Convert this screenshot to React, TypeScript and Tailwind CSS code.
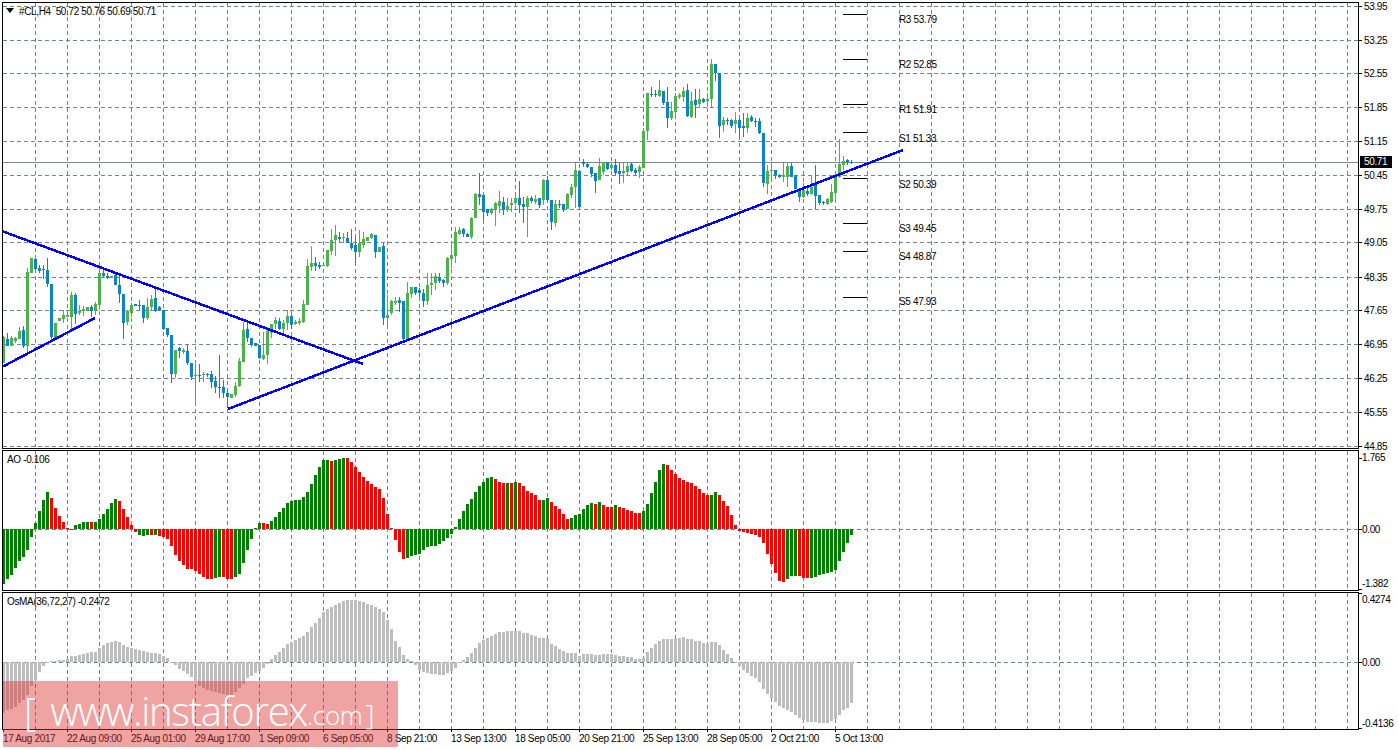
import React from "react";

// ---- chart data (pixel values read off the chart) ----
type C = [number, number, number, number, 0 | 1]; // body top, body bottom, high, low, 1 = bull
const A: C[] = [
[322,400,318,400,1],[328,347,310,347,0],[323,347,318,347,1],[323,332,320,340,1],[302,328,290,328,1],[300,348,288,355,0],[127,348,115,370,1],[84,130,84,130,1],[87,118,87,118,0],[115,123,105,130,0],[117,120,105,147,0],[120,162,85,172,0],[162,322,162,335,0],[280,325,280,325,1],[264,274,264,274,1],[255,268,240,280,1],[255,260,255,262,1],[195,260,185,300,1],[195,252,190,282,0],[243,248,225,255,1],[238,243,228,258,1],[231,243,231,243,1],[231,243,225,262,0],[222,243,215,255,1],[130,225,112,240,1],[130,138,120,145,0],[138,143,130,148,0],[138,143,138,143,1],[135,165,125,165,0],[165,192,130,218,0],[192,280,192,327,0],[243,277,240,285,1],[225,250,220,260,1],[222,228,222,228,0],[225,228,210,240,0],[225,265,225,278,0],[232,265,205,270,1],[208,232,195,240,1],[205,242,170,245,0],[232,240,228,243,0],[240,298,240,300,0],[295,316,295,320,0],[316,432,315,458,0],[360,432,360,445,1],[355,362,352,385,0],[360,366,355,372,1],[363,400,345,405,0],[400,440,400,450,0],[435,437,400,516,1],[435,437,402,455,0],[433,435,425,455,1],[433,436,428,440,0],[433,456,422,475,0],[453,470,438,490,0],[470,472,375,505,0],[470,490,450,505,0],[490,500,480,535,0],[492,503,492,503,1],[467,495,455,500,1],[393,467,385,470,1],[300,395,275,395,1],[297,323,280,335,0],[323,346,323,350,0],[340,348,340,348,0],[346,385,346,388,0],[375,387,305,390,1],[302,375,290,402,1],[282,310,282,325,1],[270,282,262,298,1],[272,296,265,300,0],[280,297,270,310,1],[258,280,240,300,1],[258,285,255,298,0],[277,282,270,285,1],[272,280,265,285,1],[222,276,210,280,1],[108,225,88,225,1],[100,112,48,122,1],[100,108,80,122,0],[104,112,95,118,0],[104,108,104,108,1],[60,107,60,110,1],[30,62,-3,75,1],[16,30,-15,78,1],[20,26,5,35,0],[22,24,10,40,1],[24,40,5,40,0],[38,55,-3,60,0],[45,65,20,100,0],[40,65,0,80,1],[26,45,5,55,1],[22,34,22,34,1],[12,24,8,26,1],[15,65,15,85,0],[50,65,50,65,1],[48,265,38,285,0],[255,263,195,295,1],[212,250,210,255,1],[212,220,200,225,1],[210,218,200,245,0],[212,328,212,330,0],[190,330,155,330,1],[172,192,170,205,1],[172,188,170,195,0],[180,190,175,200,0],[190,212,178,230,0],[165,212,128,225,1],[160,165,130,195,1],[138,160,128,180,1],[142,152,130,160,0],[150,160,148,170,0],[85,158,80,165,1],[75,87,40,115,1],[5,78,-9,100,1],
];
const B: C[] = [
[540,552,530,556,1],[538,553,535,560,0],[551,560,548,562,0],[503,562,500,567,1],[433,503,430,505,1],[433,440,370,465,0],[435,485,435,512,0],[478,490,478,497,0],[476,488,474,495,1],[458,477,455,527,1],[453,468,422,490,1],[456,480,440,495,0],[468,480,445,485,1],[458,465,445,485,1],[445,460,435,465,1],[445,465,393,490,0],[462,470,440,520,0],[445,470,437,560,1],[445,452,437,460,0],[447,456,435,462,1],[445,466,445,475,0],[390,450,388,465,1],[390,450,378,455,0],[450,515,450,540,0],[463,518,450,530,1],[462,465,450,475,0],[462,480,462,485,0],[432,478,428,478,1],[412,435,403,445,1],[360,412,338,475,1],[363,470,360,475,0],[335,343,328,350,0],[343,352,340,355,0],[350,372,350,380,0],[370,393,370,430,0],[348,390,325,390,1],[335,365,335,375,1],[337,357,335,360,0],[345,353,340,360,1],[345,370,328,375,0],[363,372,340,402,0],[363,368,335,400,1],[348,365,340,375,1],[342,362,340,365,0],[360,368,355,375,0],[350,367,345,385,1],[243,355,235,355,1],[130,242,128,270,1],[132,135,110,142,0],[133,135,120,142,0],[120,138,90,140,1],[122,160,122,165,0],[155,205,112,235,0],[183,205,155,210,1],[138,185,128,195,1],[135,140,128,148,1],[122,140,112,155,1],[120,198,103,200,0],[153,200,125,203,1],[150,165,118,205,0],[148,162,118,170,1],[148,157,145,158,0],[148,153,130,170,1],[42,148,28,172,1],[42,70,42,92,0],[68,228,68,265,0],[210,225,200,245,1],[210,213,205,225,0],[210,228,208,235,0],[210,222,185,250,1],[210,233,205,260,0],[228,233,190,260,0],[205,233,190,250,1],[202,213,195,215,0],[212,215,205,232,0],[212,250,205,252,0],[248,398,248,412,0],[363,402,345,432,1],[360,363,340,390,1],[360,375,360,388,0],[375,382,372,385,0],[375,380,340,395,1],[348,382,338,410,1],[348,380,340,382,0],[375,417,375,418,0],[417,440,415,455,0],[420,440,400,443,1],[422,432,415,437,0],[412,432,375,435,1],[405,437,345,478,0],[435,458,435,465,0],[455,458,452,465,0],[447,462,445,465,1],[427,455,403,458,1],[378,428,378,460,1],[342,382,268,385,1],[332,345,318,360,1],[331,337,327,345,0],[335,337,330,342,0],
];
const toPx = (base: number) => (c: C): C => [base + c[0] / 3, base + c[1] / 3, base + c[2] / 3, base + c[3] / 3, c[4]];
const candles: C[] = [...A.map(toPx(230)), ...B.map(toPx(50))];

const aoRuns: [string, number[]][] = [
["g",[-55,-50,-46,-39,-32,-28,-21,-8,6,18,29,37]],
["r",[31,21,13,7,1,-1]],
["g",[4,5,7,7]],["r",[7]],["g",[7,10,15,20,26,30]],["r",[28,20,12,4,-3]],
["g",[-6,-7,-6]],["r",[-6]],["g",[-6]],["r",[-7,-8,-10,-17,-26,-32,-36,-40,-40,-42,-45,-48,-50,-50]],
["g",[-49,-48]],["r",[-48,-50,-50]],["g",[-48,-45,-34,-21,-10,1,6]],["r",[6,5]],
["g",[8,12,17,21,26,28,29,29,32,37,45,54,62,69,69]],["r",[68]],["g",[69,70,71]],
["r",[71,67,62,57,52,48,45,42,40,31,15,1,-11,-23,-30]],
["g",[-29,-27,-26,-25,-21,-18,-17,-17,-15,-12,-9,-5,2,10,18,25,30,37,43,47,51,52]],
["r",[50,47,46]],["g",[46]],["r",[46]],["g",[47]],["r",[46,43,38,36,34,29]],["g",[29,31]],
["r",[27,23,20,15,10]],["g",[11,14,15,20,24,26]],["r",[25]],["g",[27]],["r",[24,22,22]],["g",[24]],
["r",[22,21,19,18,16,16]],["g",[18,25,36,47,59,65]],["r",[64,59,55,51,49,47,46,43,40,36,34]],["g",[34,37]],
["r",[34,28,23,14,4,-2,-3,-4,-5,-6,-8,-14,-25,-35,-44,-52,-53]],["g",[-50,-47,-47]],["r",[-47,-49,-49]],
["g",[-49,-48,-46,-45,-44,-43,-41,-32,-23,-14,-6]],
];
const ao: [string, number][] = aoRuns.flatMap(([c, v]) => v.map((n) => [c, n] as [string, number]));

const osma = [-51,-48,-47,-45,-41,-38,-33,-24,-18,-10,-4,-1,1,1,2,2,3,6,6,7,8,9,10,10,14,17,19,20,21,20,17,15,14,13,12,11,10,9,9,8,6,4,0,-3,-7,-9,-12,-15,-19,-24,-26,-28,-29,-30,-31,-32,-33,-33,-30,-26,-22,-16,-14,-11,-9,-6,-2,3,7,10,14,18,20,22,24,26,30,35,39,44,50,53,55,57,59,61,62,62,62,61,60,58,57,55,53,50,42,33,21,15,7,3,1,-3,-8,-10,-11,-12,-12,-13,-13,-11,-9,-6,-1,2,5,9,14,19,22,24,26,28,30,30,31,31,31,31,29,29,27,26,24,24,24,18,16,13,11,9,9,9,6,8,8,8,7,7,8,8,8,7,6,6,5,5,3,3,4,10,14,18,21,23,23,23,24,24,25,23,23,21,21,19,18,20,20,17,12,8,4,0,-4,-8,-11,-14,-16,-20,-27,-32,-36,-40,-44,-46,-48,-50,-53,-56,-58,-60,-60,-60,-61,-61,-61,-59,-57,-53,-48,-46,-41];

// ---- grid + axes ----
const vGrid = Array.from({ length: 42 }, (_, k) => 35 + 32 * k);
const mainTicks: [string, number][] = [["53.95",6],["53.25",40],["52.55",73],["51.85",107],["51.15",141],["50.45",175],["49.75",209],["49.05",242],["48.35",277],["47.65",310],["46.95",344],["46.25",378],["45.55",412],["44.85",446]];
const pivots: [string, number, number][] = [["R3 53.79",14,19],["R2 52.85",59,64],["R1 51.91",104,109],["S1 51.33",132,138],["S2 50.39",178,184],["S3 49.45",223,228],["S4 48.87",251,256],["S5 47.93",297,301]];
const dates = ["17 Aug 2017","22 Aug 09:00","25 Aug 01:00","29 Aug 17:00","1 Sep 09:00","6 Sep 05:00","8 Sep 21:00","13 Sep 13:00","18 Sep 05:00","20 Sep 21:00","25 Sep 13:00","28 Sep 05:00","2 Oct 21:00","5 Oct 13:00"];

const GRID = "#76828f";
const font = "font-['Liberation_Sans',Arial,sans-serif] text-[10px] leading-[12px] tracking-[-0.35px] text-black";

function Grid({ top, bottom, ys }: { top: number; bottom: number; ys: number[] }) {
  return (
    <g stroke={GRID} strokeWidth={1} strokeDasharray="4 3" shapeRendering="crispEdges">
      {vGrid.map((x) => <line key={x} x1={x + 0.5} x2={x + 0.5} y1={top} y2={bottom} />)}
      {ys.map((y) => <line key={y} x1={3} x2={1358} y1={y + 0.5} y2={y + 0.5} />)}
    </g>
  );
}

function Plot({ top, height, children }: { top: number; height: number; children: React.ReactNode }) {
  return (
    <svg className="block" width={1355} height={height} viewBox={`3 ${top} 1355 ${height}`}>
      {children}
    </svg>
  );
}

// Axis column: the place of a value on the scale is the content itself
function Axis({ paneTop, ticks, height, tickYs, left }: { paneTop: number; ticks: [string, number][]; height: number; tickYs: number[]; left: number }) {
  return (
    <div className="relative w-[39px] shrink-0" style={{ height }}>
      {tickYs.map((y) => (
        <div key={y} className="absolute left-0 h-[1px] w-[3px] bg-black" style={{ top: y - paneTop }} />
      ))}
      {ticks.map(([t, y]) => (
        <div key={t + y} className={`absolute whitespace-nowrap ${font}`} style={{ top: y - paneTop - 5, left }}>{t}</div>
      ))}
    </div>
  );
}

export default function App() {
  return (
    <div className="relative h-[750px] w-[1398px] overflow-hidden bg-white pl-[2px] pt-[2px]">
      <div className="flex flex-col gap-[1px]">
        {/* price pane */}
        <div className="flex">
          <div className="relative h-[447px] w-[1357px] border border-black">
            <Plot top={3} height={445}>
              <Grid top={3} bottom={447} ys={mainTicks.map((t) => t[1])} />
              <line x1={3} x2={1358} y1={162.5} y2={162.5} stroke="#76889a" shapeRendering="crispEdges" />
              <g shapeRendering="crispEdges">
                {candles.map((c, i) => {
                  const col = c[4] ? "#4cb34a" : "#0a84c4";
                  const x = 2 + 4 * i;
                  return (
                    <g key={i} fill={col}>
                      <rect x={x + 1} y={Math.round(c[2])} width={1} height={Math.max(1, Math.round(c[3]) - Math.round(c[2]))} />
                      <rect x={x} y={Math.round(c[0])} width={3} height={Math.max(1, Math.round(c[1]) - Math.round(c[0]))} />
                    </g>
                  );
                })}
              </g>
              <g stroke="#0000ff" strokeWidth={2.5} shapeRendering="crispEdges">
                <line x1={3} y1={231.5} x2={363} y2={364} />
                <line x1={3} y1={366.5} x2={95} y2={318} />
                <line x1={228} y1={409} x2={903} y2={150} />
              </g>
              <g stroke="#000" shapeRendering="crispEdges">
                {pivots.map(([t, y]) => <line key={t} x1={843} x2={867} y1={y + 0.5} y2={y + 0.5} />)}
              </g>
            </Plot>
            <div className="absolute left-[3px] top-[5px] h-0 w-0 border-x-[4px] border-t-[5px] border-x-transparent border-t-black" />
            <div className={`absolute left-[16px] top-[3px] whitespace-pre ${font}`}>#CL,H4  50.72 50.76 50.69 50.71</div>
            {pivots.map(([t, , y]) => (
              <div key={t} className={`absolute left-[896px] whitespace-nowrap ${font}`} style={{ top: y - 8 }}>{t}</div>
            ))}
          </div>
          <div className="relative">
            <Axis paneTop={2} height={447} ticks={mainTicks} tickYs={mainTicks.map((t) => t[1])} left={5} />
            <div className="absolute left-[1px] top-[154px] h-[12px] w-[32px] bg-black pl-[4px] font-['Liberation_Sans',Arial,sans-serif] text-[10px] leading-[12px] tracking-[-0.35px] text-white">50.71</div>
          </div>
        </div>

        {/* AO pane */}
        <div className="flex">
          <div className="relative h-[141px] w-[1357px] border border-black">
            <Plot top={451} height={139}>
              <Grid top={451} bottom={589} ys={[529]} />
              <g shapeRendering="crispEdges">
                {ao.map(([c, v], i) => (
                  <rect key={i} x={2 + 4 * i} y={v >= 0 ? 529 - v : 529} width={3} height={Math.max(1, Math.abs(v))} fill={c === "g" ? "#008000" : "#ff0000"} />
                ))}
              </g>
            </Plot>
            <div className={`absolute left-[4px] top-[3px] ${font}`}>AO -0.106</div>
          </div>
          <Axis paneTop={450} height={141} ticks={[["1.765", 457], ["0.00", 529], ["-1.382", 583]]} tickYs={[458, 529, 589]} left={3} />
        </div>

        {/* OsMA pane */}
        <div className="flex">
          <div className="relative h-[138px] w-[1357px] border border-black">
            <Plot top={593} height={136}>
              <Grid top={593} bottom={729} ys={[662]} />
              <g shapeRendering="crispEdges" fill="#bdbdbd">
                {osma.map((v, i) => (
                  <rect key={i} x={2 + 4 * i} y={v >= 0 ? 662 - v : 662} width={3} height={Math.max(1, Math.abs(v))} />
                ))}
              </g>
            </Plot>
            <div className={`absolute left-[4px] top-[3px] whitespace-nowrap ${font}`}>OsMA(36,72,27) -0.2472</div>
          </div>
          <Axis paneTop={592} height={138} ticks={[["0.4274", 599], ["0.00", 662], ["-0.4136", 723]]} tickYs={[593, 662, 728]} left={3} />
        </div>
      </div>

      {/* time axis */}
      <div className="ml-[1px] flex">
        {dates.map((d) => (
          <div key={d} className="w-[64px] shrink-0">
            <div className="h-[2px] w-[1px] bg-black" />
            <div className={`whitespace-nowrap pt-[1px] ${font}`}>{d}</div>
          </div>
        ))}
      </div>

      {/* watermark over the chart */}
      <div className="absolute left-[3px] top-[681px] flex h-[66px] w-[395px] items-center bg-[rgba(220,50,50,0.45)] pb-[6px] pl-[21px] font-['Open_Sans',sans-serif] font-light text-white">
        <span className="text-[38px] leading-none">[</span>
        <span className="ml-[14px] text-[40px] leading-none tracking-[-1.3px]">www.instaforex</span>
        <span className="pt-[7px] text-[26px] leading-none tracking-[-0.3px]">.com</span>
        <span className="ml-[3px] pt-[6px] text-[28px] leading-none">]</span>
      </div>
    </div>
  );
}
